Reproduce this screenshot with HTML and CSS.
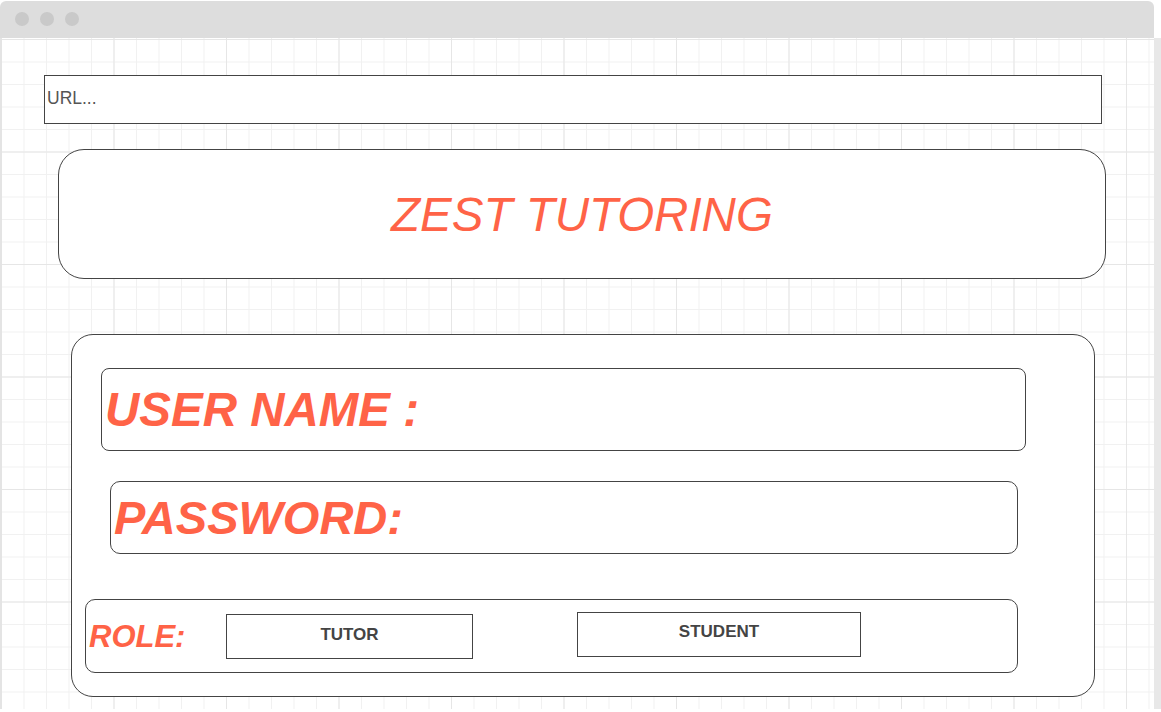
FILE: index.html
```html
<!DOCTYPE html>
<html>
<head>
<meta charset="utf-8">
<title>Zest Tutoring</title>
<link rel="stylesheet" href="styles.css">
</head>
<body>
<div class="page">
  <div class="window">
    <div class="titlebar">
      <span class="dot"></span><span class="dot"></span><span class="dot"></span>
    </div>
    <div class="canvas">
      <div class="url">URL...</div>
      <div class="header"><span class="brand">ZEST TUTORING</span></div>
      <div class="form">
        <div class="field field-user"><span class="label">USER NAME :</span></div>
        <div class="field field-pass"><span class="label">PASSWORD:</span></div>
        <div class="field field-role">
          <span class="label role-label">ROLE:</span>
          <div class="btn btn-tutor">TUTOR</div>
          <div class="btn btn-student">STUDENT</div>
        </div>
      </div>
    </div>
  </div>
  <div class="rstripe"></div>
</div>
</body>
</html>
```
FILE: styles.css
```css
* { box-sizing: border-box; }
html, body { margin: 0; padding: 0; background: #ffffff; }
body { font-family: "Liberation Sans", Arial, sans-serif; width: 1161px; height: 712px; overflow: hidden; }

.page { display: flex; align-items: flex-start; }

.window { width: 1154px; display: flex; flex-direction: column; }

.titlebar {
  height: 37px;
  margin-top: 1px;
  background: #dddddd;
  border-radius: 6px 6px 0 0;
  display: flex;
  align-items: center;
  gap: 11px;
  padding-left: 15px;
  padding-bottom: 2px;
}
.dot { width: 14px; height: 14px; border-radius: 50%; background: #c9c9c9; }

.canvas {
  height: 671px;
  border-left: 2px solid #e4e4e4;
  background-color: #ffffff;
  background-image:
    linear-gradient(to right, #e6e6e6 1px, transparent 1px),
    linear-gradient(to bottom, #e6e6e6 1px, transparent 1px),
    linear-gradient(to right, #f1f1f1 1px, transparent 1px),
    linear-gradient(to bottom, #f1f1f1 1px, transparent 1px);
  background-size: 112.5px 112.5px, 112.5px 112.5px, 22.5px 22.5px, 22.5px 22.5px;
  background-position: -1px 1px, -1px 1px, -1px 1px, -1px 1px;
  padding-top: 37px;
  display: flex;
  flex-direction: column;
  align-items: flex-start;
}

.url {
  margin-left: 42px;
  width: 1058px;
  height: 49px;
  border: 1px solid #444;
  background: #fff;
  color: #555;
  font-size: 17.5px;
  display: flex;
  align-items: center;
  padding-left: 2px;
  padding-bottom: 2px;
}

.header {
  margin-top: 25px;
  margin-left: 56px;
  width: 1048px;
  height: 130px;
  border: 1px solid #444;
  border-radius: 26px;
  background: #fff;
  display: flex;
  align-items: center;
  justify-content: center;
}
.brand {
  color: #ff6347;
  font-style: italic;
  font-size: 47.5px;
  line-height: 1;
  padding-top: 1px;
}

.form {
  margin-top: 55px;
  margin-left: 69px;
  width: 1024px;
  height: 363px;
  border: 1px solid #444;
  border-radius: 22px;
  background: #fff;
  display: flex;
  flex-direction: column;
  align-items: flex-start;
}

.field {
  border: 1px solid #444;
  border-radius: 9px;
  background: #fff;
  display: flex;
  align-items: center;
  padding-left: 3px;
}
.label {
  color: #ff6347;
  font-weight: bold;
  font-style: italic;
  line-height: 1;
}
.field-user { margin-top: 33px; margin-left: 29px; width: 925px; height: 83px; border-radius: 8px; }
.field-user .label { font-size: 47.5px; padding-top: 1px; }
.field-pass { margin-top: 30px; margin-left: 38px; width: 908px; height: 73px; border-radius: 10px; }
.field-pass .label { font-size: 47px; }
.field-role { margin-top: 45px; margin-left: 13px; width: 933px; height: 74px; border-radius: 10px; }
.role-label { font-size: 31px; width: 137px; }

.btn {
  border: 1px solid #444;
  background: #fff;
  color: #444;
  font-weight: bold;
  font-size: 17px;
  display: flex;
  align-items: center;
  justify-content: center;
  height: 45px;
}
.btn-tutor { width: 247px; padding-bottom: 3px; }
.btn-student { width: 284px; margin-left: 104px; margin-bottom: 4px; padding-bottom: 4px; }

.rstripe { width: 7px; height: 671px; margin-top: 38px; background: #e8e8e8; }
```
